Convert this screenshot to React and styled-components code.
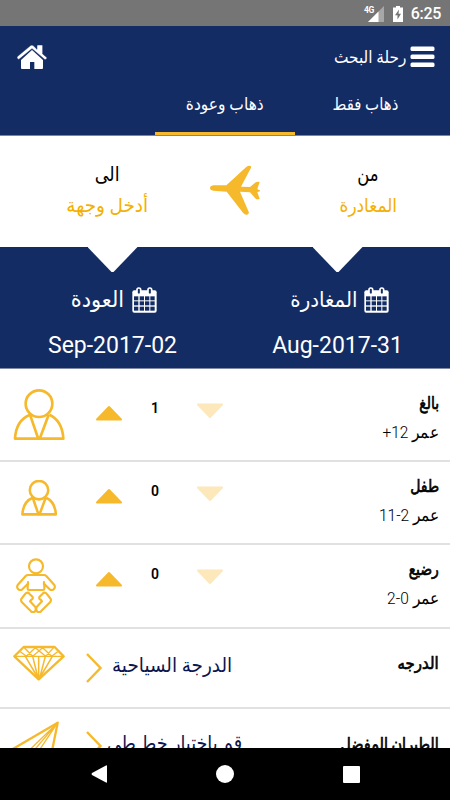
import React from "react";
import styled, { createGlobalStyle } from "styled-components";

const navy = "#142c64";
const gold = "#f6b92c";

const GlobalStyle = createGlobalStyle`
  * {
    box-sizing: border-box;
  }

  body {
    margin: 0;
    background: #fff;
    font-family: Roboto, "DejaVu Sans", sans-serif;
  }
`;

const Screen = styled.div`
  width: 450px;
  height: 800px;
  display: flex;
  flex-direction: column;
  overflow: hidden;
  background: #fff;
`;

const StatusBar = styled.div`
  flex: none;
  height: 26px;
  display: flex;
  align-items: center;
  justify-content: flex-end;
  padding: 1px 9px 0 0;
  background: #757575;
  color: #fff;
`;

const Network = styled.span`
  align-self: flex-start;
  margin: 4px -6px 0 0;
  font-size: 8.5px;
  line-height: 10px;
  font-weight: 700;
  letter-spacing: -0.5px;
`;

const Clock = styled.span`
  margin-left: 8px;
  font-size: 16px;
  line-height: 24px;
  font-weight: 500;
  letter-spacing: -0.3px;
`;

const Header = styled.header`
  flex: none;
  height: 110px;
  background: ${navy};
  border-bottom: 1px solid #7d83a2;
  color: #fff;
`;

const TitleRow = styled.div`
  height: 58px;
  display: flex;
  align-items: center;
  justify-content: space-between;
  padding: 3px 15px 0 17px;
`;

const Title = styled.div`
  display: flex;
  align-items: center;
  gap: 4px;
`;

// Arabic run, condensed or widened horizontally around its own box
const Text = styled.span.attrs({ dir: "rtl" })`
  display: block;
  flex: none;
  white-space: nowrap;
  font-size: ${props => props.$size || 17}px;
  line-height: 24px;
  font-weight: ${props => props.$weight || 400};
  color: ${props => props.$color || "inherit"};
  transform: scaleX(${props => props.$stretch || 1});
  transform-origin: ${props => props.$origin || "center"};
`;

const StrongText = styled(Text)`
  -webkit-text-stroke: 0.7px currentColor;
`;

const Tabs = styled.nav`
  height: 51px;
  display: grid;
  grid-template-columns: 155px 140px 140px;
`;

const Tab = styled.div`
  grid-column: ${props => props.$column};
  grid-row: 1;
  display: flex;
  justify-content: center;
  padding-top: 8px;
  border-bottom: 3px solid ${props => (props.$active ? gold : "transparent")};
`;

const Route = styled.section`
  flex: none;
  height: 111px;
  display: grid;
  grid-template-columns: 215px 40px 1fr;
  align-items: start;
`;

const Place = styled.div`
  display: flex;
  flex-direction: column;
  align-items: center;
  gap: 8px;
  padding: 26px 0 0 ${props => props.$left || 0}px;
`;

const PlaneSlot = styled.div`
  justify-self: center;
  padding-top: 29px;
`;

const Dates = styled.section`
  flex: none;
  height: 122px;
  display: grid;
  grid-template-columns: 225px 225px;
  background: ${navy};
  border-bottom: 1px solid #8288a8;
  color: #fff;
`;

const DateCell = styled.div`
  display: flex;
  flex-direction: column;
  align-items: center;
`;

const Notch = styled.div`
  width: 50px;
  height: 25px;
  background: #fff;
  clip-path: polygon(0 0, 100% 0, 52% 100%, 48% 100%);
`;

const DateLabel = styled.div`
  display: flex;
  align-items: center;
  gap: 7px;
  height: 30px;
  margin-top: 13px;
`;

const DateValue = styled.div`
  margin-top: 17px;
  font-size: 23px;
  line-height: 28px;
`;

const List = styled.main`
  flex: 1;
  min-height: 0;
  overflow: hidden;
`;

const Row = styled.div`
  height: ${props => props.$height}px;
  display: grid;
  grid-template-columns: 80px 58px 34px 76px 1fr;
  border-bottom: 2px solid #e1e1e1;
`;

const Choice = styled.div`
  grid-column: 2 / 5;
  display: flex;
  gap: ${props => props.$gap}px;
  padding: ${props => props.$top}px 0 0 5px;
  color: #0b1650;

  svg {
    flex: none;
  }

  ${Text} {
    margin-top: 1px;
  }
`;

const Icon = styled.div`
  padding: ${props => props.$top}px 0 0 ${props => props.$left}px;
`;

const Arrow = styled.div`
  display: flex;
  justify-content: center;
  padding-top: ${props => props.$top}px;
  opacity: ${props => (props.$faded ? 0.32 : 1)};

  svg {
    transform: ${props => (props.$down ? "scaleY(-1)" : "none")};
  }
`;

const Count = styled.div`
  padding-top: ${props => props.$top}px;
  text-align: center;
  font-size: 14px;
  line-height: 16px;
  font-weight: 600;
  color: #000;
`;

const Label = styled.div`
  display: flex;
  flex-direction: column;
  align-items: flex-end;
  gap: 5px;
  padding: ${props => props.$top}px 11px 0 0;
  color: #000;
`;

const NavBar = styled.footer`
  flex: none;
  height: 52px;
  display: grid;
  grid-template-columns: 161px 92px 160px;
  align-items: center;
  justify-items: center;
  padding-left: 18px;
  background: #000;

  svg {
    display: block;
  }
`;

const SignalIcon = () => (
  <svg width="16" height="16" viewBox="0 0 16 16">
    <path d="M16 0v16H0z" fill="#a7a7a7" />
    <path d="M10.500 5.500v10.500H0z" fill="#fff" />
  </svg>
);

const Battery = styled.svg`
  margin-left: 9px;
`;

const BatteryIcon = () => (
  <Battery width="10" height="16" viewBox="0 0 10 16">
    <path d="M3 0h4v1.500h3V16H0V1.500h3z" fill="#fff" />
    <path d="M6 3.500 2 9.300h2.500V13.500L8 7.700H5.500z" fill="#757575" />
  </Battery>
);

const HomeIcon = () => (
  <svg width="30" height="24" viewBox="0 0 90 72">
    <path d="M12 45 45 15l33 30v24q0 3-3 3H52V51H39v21H15q-3 0-3-3z" fill="#fff" />
    <path
      d="M60 13V2q0-2 2-2h13q2 0 2 2v25l12 10q2 3-1 5l-4 2L45 11 6 43q-3 1-6-4 0-3 2-5L40 2q5-4 10 1z"
      fill="#fff"
      stroke={navy}
      strokeWidth="1.500"
    />
  </svg>
);

const MenuIcon = () => (
  <svg width="25" height="22" viewBox="0 0 25 22" fill="#fff">
    <rect x="0.500" y="0.500" width="24" height="4.500" rx="1.500" />
    <rect x="0.500" y="8.500" width="24" height="4.500" rx="1.500" />
    <rect x="0.500" y="16.500" width="24" height="4.500" rx="1.500" />
  </svg>
);

const PlaneIcon = () => (
  <svg width="50" height="51" viewBox="0 0 150 153" fill={gold}>
    <path d="M10 61h39L108 7q5-7 14-4 3 3-1 9L93 65l27 1 17-14q6-3 12-1l-7 21 3 2q5 0 5 3t-5 3l-3 2 7 19q-6 4-12 0l-17-19-30-2 26 60q2 8-5 9-7 1-12-6L50 80l-40-3Q0 75 0 69t10-8z" />
  </svg>
);

const CalendarIcon = () => (
  <svg width="25" height="26" viewBox="0 0 75 78">
    <rect x="1" y="10" width="73" height="67" rx="6" fill="#fff" />
    <g fill={navy}>
      {[28, 43, 59].map(y =>
        [6, 23, 39, 55].map(x => (
          <rect key={`${x}-${y}`} x={x} y={y} width="13" height="12" />
        ))
      )}
    </g>
    <g fill={navy} stroke="#fff" strokeWidth="5">
      <rect x="15" y="3" width="11" height="19" rx="5" />
      <rect x="48" y="3" width="11" height="19" rx="5" />
    </g>
  </svg>
);

const PersonIcon = ({ size = 52, stroke = 8 }) => (
  <svg
    width={size}
    height={size}
    viewBox="0 0 156 156"
    fill="none"
    stroke={gold}
    strokeWidth={stroke}
    strokeLinejoin="round"
  >
    <circle cx="78" cy="44" r="40" />
    <path d="M51 77Q9 94 6 149h145q-3-54-42-72" />
    <path d="m51 77 24 70h6l26-70" />
  </svg>
);

const BabyIcon = () => (
  <svg
    width="40"
    height="55"
    viewBox="0 0 120 165"
    fill="none"
    stroke={gold}
    strokeWidth="6.500"
    strokeLinejoin="round"
    strokeLinecap="round"
  >
    <circle cx="60" cy="25" r="21" />
    <path d="M36 51h48q4 0 7 3l24 27q4 7-2 13-6 4-12 0L85 78v14q0 4-4 4H39q-4 0-4-4V78L19 94q-6 4-12 0-6-6-2-13l24-27q3-3 7-3z" />
    <path d="M36 72v8M84 72v8" />
    <path d="M29 106q7-4 11 1l10 10q2 6-5 9l-3 4 16 17q3 8-1 13-6 5-12 0L17 132q-4-7 1-12z" />
    <path d="M91 106q-7-4-11 1l-10 10q-2 6 5 9l3 4-16 17q-3 8 1 13 6 5 12 0l28-28q4-7-1-12z" />
  </svg>
);

const DiamondIcon = () => (
  <svg
    width="52"
    height="36"
    viewBox="0 0 156 108"
    fill="none"
    stroke={gold}
    strokeWidth="7"
    strokeLinejoin="round"
  >
    <path d="M4 34 32 6h93l27 28-75 69z" />
    <path d="M4 34h148" strokeWidth="4" />
    <path
      d="M22 20 40 34 67 8 98 34 122 8M134 20 116 34 89 8 59 34 34 8"
      strokeWidth="4"
    />
    <path d="m37 34 38 65L59 34M77 34v65M97 34 80 99l38-65" strokeWidth="4.500" />
  </svg>
);

const PaperPlaneIcon = () => (
  <svg
    width="54"
    height="50"
    viewBox="0 0 162 150"
    fill="none"
    stroke={gold}
    strokeWidth="7"
    strokeLinejoin="round"
  >
    <path d="M158 5 3 96l38 14 88 40z" />
    <path d="M158 5 50 110M158 5 84 116M158 5 66 113" strokeWidth="4" />
  </svg>
);

const Triangle = () => (
  <svg width="28" height="17" viewBox="0 0 28 17">
    <path
      d="M14 2 26 14.500H2z"
      fill={gold}
      stroke={gold}
      strokeWidth="2"
      strokeLinejoin="round"
    />
  </svg>
);

const Chevron = () => (
  <svg width="18" height="32" viewBox="0 0 18 32" fill="none">
    <path d="m2 2 13.500 14L2 30" stroke={gold} strokeWidth="2.400" />
  </svg>
);

const passengers = [
  { label: "بالغ", age: "عمر 12+", count: 1, height: 93, offset: 10, icon: <PersonIcon />, top: 20, left: 13 },
  { label: "طفل", age: "عمر 2-11", count: 0, height: 83, offset: 0, icon: <PersonIcon size={36} stroke={11} />, top: 18, left: 21 },
  { label: "رضيع", age: "عمر 0-2", count: 0, height: 84, offset: 0, icon: <BabyIcon />, top: 13, left: 16 }
];

const PassengerRow = ({ label, age, count, height, offset, icon, top, left }) => (
  <Row $height={height}>
    <Icon $top={top} $left={left}>
      {icon}
    </Icon>
    <Arrow $top={offset + 26}>
      <Triangle />
    </Arrow>
    <Count $top={offset + 21}>{count}</Count>
    <Arrow $top={offset + 23} $down $faded>
      <Triangle />
    </Arrow>
    <Label $top={offset + 12}>
      <StrongText $stretch={0.82} $origin="right">
        {label}
      </StrongText>
      <Text $weight={300} $stretch={0.91} $origin="right">
        {age}
      </Text>
    </Label>
  </Row>
);

const App = () => (
  <Screen>
    <GlobalStyle />
    <StatusBar>
      <Network>4G</Network>
      <SignalIcon />
      <BatteryIcon />
      <Clock>6:25</Clock>
    </StatusBar>
    <Header>
      <TitleRow>
        <HomeIcon />
        <Title>
          <Text $stretch={0.9} $origin="right">رحلة البحث</Text>
          <MenuIcon />
        </Title>
      </TitleRow>
      <Tabs>
        <Tab $column={3}>
          <Text $stretch={0.88}>ذهاب فقط</Text>
        </Tab>
        <Tab $column={2} $active>
          <Text $stretch={0.91}>ذهاب وعودة</Text>
        </Tab>
      </Tabs>
    </Header>
    <Route>
      <Place>
        <Text $size={20} $color="#000" $stretch={0.88}>الى</Text>
        <Text $size={19} $color="#f4b000" $stretch={0.97}>أدخل وجهة</Text>
      </Place>
      <PlaneSlot>
        <PlaneIcon />
      </PlaneSlot>
      <Place $left={31}>
        <Text $size={20} $color="#000" $stretch={0.82}>من</Text>
        <Text $size={19} $color="#f4b000" $stretch={0.89}>المغادرة</Text>
      </Place>
    </Route>
    <Dates>
      <DateCell>
        <Notch />
        <DateLabel>
          <Text $size={22} $stretch={0.95} $origin="right">العودة</Text>
          <CalendarIcon />
        </DateLabel>
        <DateValue>Sep-2017-02</DateValue>
      </DateCell>
      <DateCell>
        <Notch />
        <DateLabel>
          <Text $size={21} $stretch={0.94} $origin="right">المغادرة</Text>
          <CalendarIcon />
        </DateLabel>
        <DateValue>Aug-2017-31</DateValue>
      </DateCell>
    </Dates>
    <List>
      {passengers.map(passenger => (
        <PassengerRow key={passenger.label} {...passenger} />
      ))}
      <Row $height={80}>
        <Icon $top={16} $left={13}>
          <DiamondIcon />
        </Icon>
        <Choice $top={23} $gap={9}>
          <Chevron />
          <Text $size={20} $stretch={0.92} $origin="left">الدرجة السياحية</Text>
        </Choice>
        <Label $top={22}>
          <StrongText $stretch={0.88} $origin="right">الدرجه</StrongText>
        </Label>
      </Row>
      <Row $height={90}>
        <Icon $top={12} $left={5}>
          <PaperPlaneIcon />
        </Icon>
        <Choice $top={21} $gap={4}>
          <Chevron />
          <Text $size={20} $stretch={0.88} $origin="left">قم باختيار خط طي</Text>
        </Choice>
        <Label $top={23}>
          <StrongText $stretch={0.85} $origin="right">الطيران المفضل</StrongText>
        </Label>
      </Row>
    </List>
    <NavBar>
      <svg width="16" height="18" viewBox="0 0 16 18">
        <path d="M16 1v16q0 1-1 .5L1 10Q0 9 1 8L15 .5q1-.5 1 .5z" fill="#fff" />
      </svg>
      <svg width="18" height="18" viewBox="0 0 18 18">
        <circle cx="9" cy="9" r="9" fill="#fff" />
      </svg>
      <svg width="17" height="17" viewBox="0 0 17 17">
        <rect width="17" height="17" rx="1" fill="#fff" />
      </svg>
    </NavBar>
  </Screen>
);

export default App;
